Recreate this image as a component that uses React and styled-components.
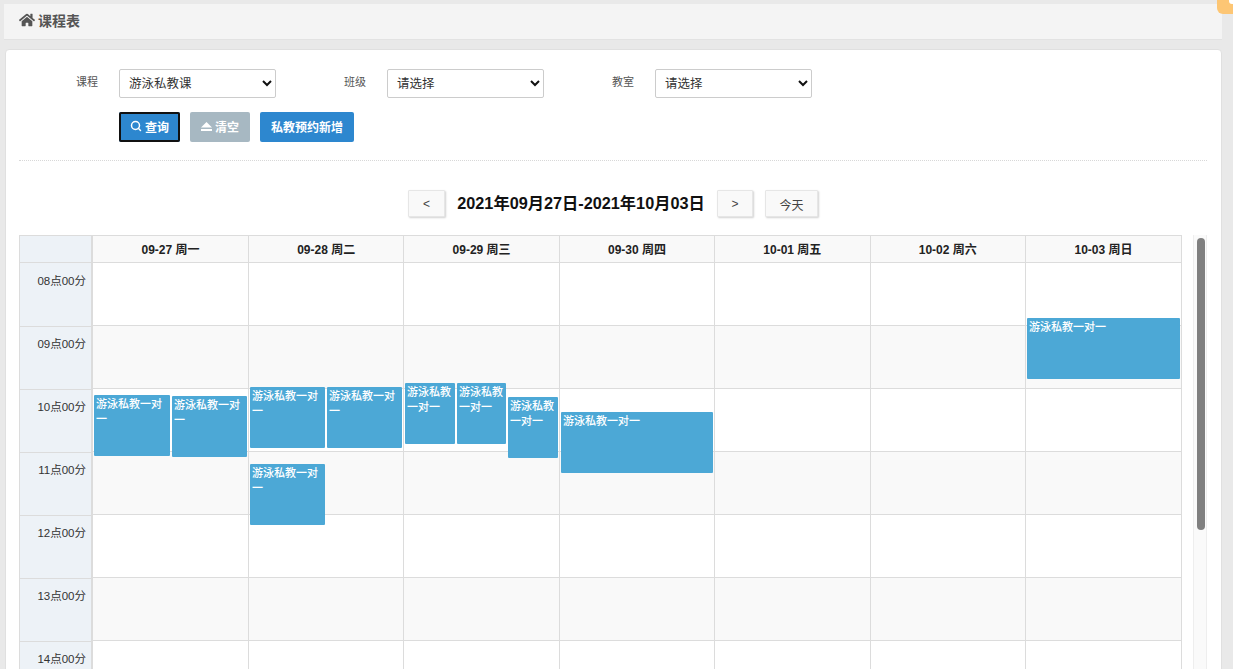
import React from "react";
import styled, { createGlobalStyle } from "styled-components";
import { FaHome } from "react-icons/fa";
import { Search } from "lucide-react";

const FONT = `"Liberation Sans", "Noto Sans CJK SC", sans-serif`;
const COLUMNS = "73px 156px repeat(5, 155.4px) 1fr";

const GlobalStyle = createGlobalStyle`
  html, body {
    margin: 0;
    height: 100%;
    overflow: hidden;
    background: #e9e9e9;
    font-family: ${FONT};
  }
  * { box-sizing: border-box; }
`;

const Page = styled.div`
  height: 669px;
  overflow: hidden;
  padding: 4px 11px 0 4px;
`;
const Corner = styled.div`
  position: absolute;
  top: 0;
  right: 0;
  width: 16px;
  height: 14px;
  background: #fdc674;
  border-bottom-left-radius: 6px;
  &::after {
    content: "";
    position: absolute;
    top: 0;
    right: 0;
    width: 4px;
    height: 4px;
    background: #fff;
    border-bottom-left-radius: 3px;
  }
`;
const Breadcrumb = styled.div`
  height: 36px;
  display: flex;
  align-items: center;
  gap: 3px;
  padding: 0 0 4px 15px;
  background: #f4f4f4;
  border-bottom: 1px solid #e2e2e2;
  color: #555;
  font-size: 14px;
  font-weight: 700;
`;
const Card = styled.div`
  margin: 9px 0 0 1px;
  height: 640px;
  padding: 19px 14px 0 13px;
  background: #fff;
  border: 1px solid #e0e0e0;
  border-radius: 4px;
`;
const Filters = styled.div`
  display: flex;
`;
const Field = styled.div`
  display: flex;
  width: 268px;
  height: 29px;
`;
const Label = styled.label`
  width: 100px;
  padding: 6px 21px 0 0;
  text-align: right;
  font-size: 11px;
  line-height: 14px;
  color: #555;
`;
const SelectWrap = styled.div`
  position: relative;
  width: 157px;
  height: 29px;
  svg {
    position: absolute;
    top: 11px;
    right: 4px;
    pointer-events: none;
  }
`;
const Select = styled.select`
  appearance: none;
  width: 100%;
  height: 100%;
  padding: 0 0 0 9px;
  background: #fff;
  border: 1px solid #ccc;
  border-radius: 2px;
  color: #333;
  font-family: ${FONT};
  font-size: 12.5px;
`;
const Actions = styled.div`
  display: flex;
  gap: 10px;
  margin: 14px 0 0 100px;
`;
const ActionButton = styled.button`
  display: flex;
  align-items: center;
  justify-content: center;
  gap: 3px;
  height: 30px;
  width: ${(p) => p.$width}px;
  padding: 0 0 2px;
  background: ${(p) => (p.$muted ? "#a7b8c2" : "#2d87cf")};
  border: 0;
  border-radius: 2px;
  box-shadow: ${(p) => (p.$focused ? "inset 0 0 0 2px #111" : "none")};
  color: #fff;
  font-family: ${FONT};
  font-size: 12px;
  font-weight: 700;
`;
const Divider = styled.div`
  margin-top: 18px;
  border-top: 1px dotted #d8d8d8;
`;
const WeekNav = styled.div`
  display: flex;
  align-items: center;
  justify-content: center;
  height: 27px;
  margin: 29px 0 18px;
`;
const NavButton = styled.button`
  width: ${(p) => p.$width}px;
  height: 27px;
  margin-left: ${(p) => p.$left || 0}px;
  padding: 1px 0 0;
  background: #f9f9f9;
  border: 1px solid #e6e6e6;
  border-radius: 1px;
  box-shadow: 1px 1px 2px rgba(0, 0, 0, 0.18);
  color: #444;
  font-family: ${FONT};
  font-size: 12px;
`;
const WeekTitle = styled.div`
  width: 272px;
  padding-bottom: 3px;
  text-align: center;
  font-size: 16.25px;
  font-weight: 700;
  color: #111;
`;
const CalendarRow = styled.div`
  display: flex;
  align-items: flex-start;
`;
const Calendar = styled.div`
  flex: none;
  width: 1163px;
  border: 1px solid #dcdcdc;
  border-bottom: 0;
`;
const HeaderRow = styled.div`
  display: grid;
  grid-template-columns: ${COLUMNS};
  height: 27px;
  border-bottom: 1px solid #dcdcdc;
`;
const Gutter = styled.div`
  background: #edf2f7;
  border-right: 2px solid #dcdcdc;
`;
const DayHead = styled.div`
  display: flex;
  align-items: center;
  justify-content: center;
  padding-bottom: 2px;
  background: #f9f9f9;
  border-right: 1px solid #dcdcdc;
  font-size: 12px;
  font-weight: 700;
  color: #222;
  &:last-child { border-right: 0; }
`;
const BodyGrid = styled.div`
  display: grid;
  grid-template-columns: ${COLUMNS};
`;
const TimeColumn = styled.div`
  padding-top: 1px;
  background: #edf2f7;
  border-right: 2px solid #dcdcdc;
`;
const TimeCell = styled.div`
  height: 63px;
  padding: 10px 5px 0 0;
  border-bottom: 1px solid #dcdcdc;
  text-align: right;
  font-size: 11.5px;
  line-height: 14px;
  color: #333;
`;
const DayColumn = styled.div`
  position: relative;
  border-right: 1px solid #dcdcdc;
  &:last-child { border-right: 0; }
`;
const SlotCell = styled.div`
  height: 63px;
  border-bottom: 1px solid #dcdcdc;
  background: ${(p) => (p.$odd ? "#f9f9f9" : "#fff")};
`;
const Event = styled.div`
  position: absolute;
  height: 61px;
  padding: 2px;
  background: #4ca8d6;
  border-radius: 1px;
  color: #fff;
  font-size: 11px;
  font-weight: 500;
  line-height: 15px;
  overflow: hidden;
`;
const ScrollTrack = styled.div`
  flex: none;
  width: 14px;
  height: 440px;
  margin-left: 11px;
  padding: 3px 0 0 3px;
  background: #fafafa;
  border: solid #eee;
  border-width: 0 1px;
`;
const ScrollThumb = styled.div`
  width: 8px;
  height: 292px;
  background: #808080;
  border-radius: 4px;
`;

const times = ["08", "09", "10", "11", "12", "13", "14"];

// top is measured from the first body row, left from the day column edge
const days = [
  {
    label: "09-27 周一",
    events: [
      { left: 1, top: 132, width: 76 },
      { left: 79, top: 133, width: 75 },
    ],
  },
  {
    label: "09-28 周二",
    events: [
      { left: 1, top: 124, width: 75 },
      { left: 78, top: 124, width: 75 },
      { left: 1, top: 201, width: 75 },
    ],
  },
  {
    label: "09-29 周三",
    events: [
      { left: 0.6, top: 120, width: 50 },
      { left: 52.6, top: 120, width: 49 },
      { left: 103.6, top: 134, width: 50 },
    ],
  },
  { label: "09-30 周四", events: [{ left: 1.2, top: 149, width: 152 }] },
  { label: "10-01 周五", events: [] },
  { label: "10-02 周六", events: [] },
  { label: "10-03 周日", events: [{ left: 1, top: 55, width: 153 }] },
];

export default function App() {
  return (
    <Page>
      <GlobalStyle />
      <Corner />
      <Breadcrumb>
        <FaHome size={16} />
        课程表
      </Breadcrumb>
      <Card>
        <Filters>
          {[
            ["课程", "游泳私教课"],
            ["班级", "请选择"],
            ["教室", "请选择"],
          ].map(([label, value]) => (
            <Field key={label}>
              <Label>{label}</Label>
              <SelectWrap>
                <Select defaultValue={value}>
                  <option>{value}</option>
                </Select>
                <svg width="10" height="7" viewBox="0 0 10 7">
                  <path d="M1 1l4 4 4-4" fill="none" stroke="#111" strokeWidth="2" />
                </svg>
              </SelectWrap>
            </Field>
          ))}
        </Filters>
        <Actions>
          <ActionButton $width={61} $focused>
            <Search size={12} strokeWidth={3} />
            查询
          </ActionButton>
          <ActionButton $width={60} $muted>
            <svg width="11" height="9" viewBox="0 0 11 9" fill="currentColor">
              <path d="M5.5 0L11 5.5H0z" />
              <rect y="7" width="11" height="2" />
            </svg>
            清空
          </ActionButton>
          <ActionButton $width={94}>私教预约新增</ActionButton>
        </Actions>
        <Divider />
        <WeekNav>
          <NavButton $width={37}>&lt;</NavButton>
          <WeekTitle>2021年09月27日-2021年10月03日</WeekTitle>
          <NavButton $width={36}>&gt;</NavButton>
          <NavButton $width={53} $left={12}>今天</NavButton>
        </WeekNav>
        <CalendarRow>
          <Calendar>
            <HeaderRow>
              <Gutter />
              {days.map((day) => (
                <DayHead key={day.label}>{day.label}</DayHead>
              ))}
            </HeaderRow>
            <BodyGrid>
              <TimeColumn>
                {times.map((t) => (
                  <TimeCell key={t}>{t}点00分</TimeCell>
                ))}
              </TimeColumn>
              {days.map((day) => (
                <DayColumn key={day.label}>
                  {times.map((t, i) => (
                    <SlotCell key={t} $odd={i % 2 === 1} />
                  ))}
                  {day.events.map((ev, i) => (
                    <Event
                      key={i}
                      style={{ left: ev.left, top: ev.top, width: ev.width }}
                    >
                      游泳私教一对一
                    </Event>
                  ))}
                </DayColumn>
              ))}
            </BodyGrid>
          </Calendar>
          <ScrollTrack>
            <ScrollThumb />
          </ScrollTrack>
        </CalendarRow>
      </Card>
    </Page>
  );
}
